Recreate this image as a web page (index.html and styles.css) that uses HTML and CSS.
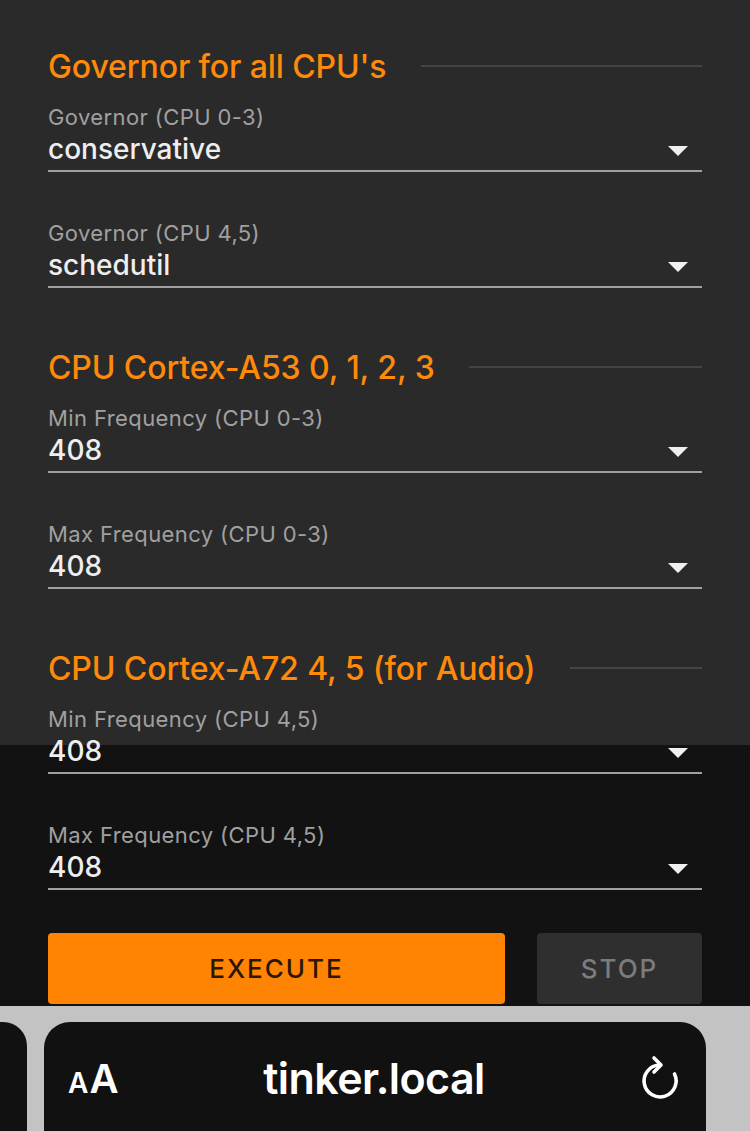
FILE: index.html
```html
<!DOCTYPE html>
<html>
<head>
<meta charset="utf-8">
<link rel="stylesheet" href="styles.css">
</head>
<body>
<main class="page">
  <section class="group">
    <h2 class="group-title"><span>Governor for all CPU's</span><i class="rule"></i></h2>
    <div class="field">
      <div class="label">Governor (CPU 0-3)</div>
      <div class="select"><span class="value">conservative</span><i class="caret"></i></div>
    </div>
    <div class="field">
      <div class="label">Governor (CPU 4,5)</div>
      <div class="select"><span class="value">schedutil</span><i class="caret"></i></div>
    </div>
  </section>
  <section class="group">
    <h2 class="group-title"><span>CPU Cortex-A53 0, 1, 2, 3</span><i class="rule"></i></h2>
    <div class="field">
      <div class="label">Min Frequency (CPU 0-3)</div>
      <div class="select"><span class="value">408</span><i class="caret"></i></div>
    </div>
    <div class="field">
      <div class="label">Max Frequency (CPU 0-3)</div>
      <div class="select"><span class="value">408</span><i class="caret"></i></div>
    </div>
  </section>
  <section class="group">
    <h2 class="group-title"><span>CPU Cortex-A72 4, 5 (for Audio)</span><i class="rule"></i></h2>
    <div class="field">
      <div class="label">Min Frequency (CPU 4,5)</div>
      <div class="select"><span class="value">408</span><i class="caret"></i></div>
    </div>
    <div class="field">
      <div class="label">Max Frequency (CPU 4,5)</div>
      <div class="select"><span class="value">408</span><i class="caret"></i></div>
    </div>
  </section>
  <div class="actions">
    <button class="btn btn-primary">EXECUTE</button>
    <button class="btn btn-stop">STOP</button>
  </div>
</main>
<footer class="safari">
  <div class="tab-stub"></div>
  <div class="url-pill">
    <span class="aa"><span class="a-small">A</span><span class="a-big">A</span></span>
    <span class="url">tinker.local</span>
    <span class="reload-wrap">
      <svg class="reload" width="40" height="48" viewBox="0 0 40 48" fill="none" stroke="#fff" stroke-width="3.6" stroke-linecap="round" stroke-linejoin="round">
        <path d="M19 11 A16 16 0 1 0 34.5 20"/>
        <path d="M14 4 L21 11 L14 18"/>
      </svg>
    </span>
  </div>
</footer>
</body>
</html>
```

FILE: styles.css
```css
* { box-sizing: border-box; }
html, body { margin: 0; padding: 0; }
body {
  width: 750px;
  height: 1131px;
  overflow: hidden;
  background: #121212;
  font-family: "Inter", "Roboto", "Liberation Sans", sans-serif;
}
.page {
  height: 1006px;
  padding: 46px 48px 0 48px;
  background: linear-gradient(#2a2a2a 0, #2a2a2a 745px, #121212 745px);
  overflow: hidden;
}
.group + .group { margin-top: 59px; }
.group-title {
  display: flex;
  align-items: center;
  gap: 34px;
  margin: 0;
  height: 40px;
  font-size: 32px;
  font-weight: 500;
  color: #ff8a0a;
  letter-spacing: -0.1px;
  white-space: nowrap;
}
.rule {
  flex: 1;
  height: 2px;
  background: #444;
}
.field { margin-top: 19px; }
.group .field + .field { margin-top: 49px; }
.label {
  height: 24px;
  line-height: 24px;
  font-size: 22px;
  letter-spacing: 0.4px;
  color: #a0a0a0;
}
.select {
  margin-top: 4px;
  height: 39px;
  display: flex;
  align-items: center;
  justify-content: space-between;
  padding-bottom: 5px;
  border-bottom: 2px solid #a0a0a0;
}
.value {
  font-size: 28px;
  line-height: 32px;
  color: #eeeeee;
  font-weight: 500;
}
.caret {
  width: 0;
  height: 0;
  margin-right: 14px;
  margin-top: 4px;
  border-left: 10px solid transparent;
  border-right: 10px solid transparent;
  border-top: 10px solid #f0f0f0;
}
.actions {
  display: flex;
  gap: 32px;
  margin-top: 43px;
}
.btn {
  height: 71px;
  border: 0;
  border-radius: 4px;
  font-family: "Inter", "Roboto", "Liberation Sans", sans-serif;
  font-size: 26px;
  font-weight: 500;
  letter-spacing: 2px;
}
.btn-primary {
  width: 457px;
  background: #ff8403;
  color: #2a1603;
}
.btn-stop {
  width: 165px;
  background: #2f2f2f;
  color: #7c7c7c;
}
.safari {
  height: 125px;
  background: #c3c3c3;
  display: flex;
  gap: 17px;
  padding-top: 16px;
}
.tab-stub {
  width: 27px;
  background: #111;
  border-radius: 0 24px 0 0;
}
.url-pill {
  width: 662px;
  background: #111;
  border-radius: 26px 26px 0 0;
  display: grid;
  grid-template-columns: 1fr auto 1fr;
  align-items: center;
  padding: 0 26px 0 24px;
  color: #fff;
}
.aa {
  display: flex;
  align-items: baseline;
  font-family: "Inter", "Roboto", sans-serif;
  font-weight: 600;
  margin-top: 4px;
}
.a-small { font-size: 28px; }
.a-big { font-size: 40px; margin-left: 1px; }
.url {
  text-align: center;
  font-size: 43px;
  font-weight: 600;
  letter-spacing: -0.6px;
  margin-top: 2px;
}
.reload-wrap {
  display: flex;
  justify-content: flex-end;
}
.reload { margin-top: 2px; }
```
